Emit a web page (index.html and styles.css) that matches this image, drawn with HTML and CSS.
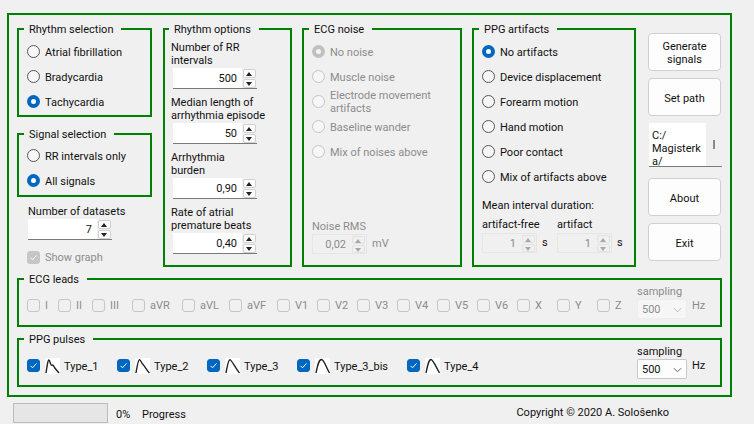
FILE: index.html
```html
<!DOCTYPE html>
<html lang="en">
<head>
    <meta charset="UTF-8">
    <meta name="viewport" content="width=device-width, initial-scale=1.0">
    <title>Signal generator</title>
    <link rel="stylesheet" href="styles.css">
</head>
<body>

    <div class="frame">
        <div class="top-row">

            <div class="left-col">
                <div class="group rhythm-sel">
                    <span class="group-title">Rhythm selection</span>
                    <div class="opt"><span class="radio"></span>Atrial fibrillation</div>
                    <div class="opt"><span class="radio"></span>Bradycardia</div>
                    <div class="opt"><span class="radio on"></span>Tachycardia</div>
                </div>
                <div class="group signal-sel">
                    <span class="group-title">Signal selection</span>
                    <div class="opt"><span class="radio"></span>RR intervals only</div>
                    <div class="opt"><span class="radio on"></span>All signals</div>
                </div>
                <div class="datasets">
                    <div class="line">Number of datasets</div>
                    <div class="spin"><span class="spin-val">7</span><span class="spin-btns"><i class="up"></i><i class="down"></i></span></div>
                </div>
                <div class="show-graph off"><span class="check ticked-off"><svg viewBox="0 0 13 13"><path d="M3.5 6.8l2 2 4-4.4" /></svg></span>Show graph</div>
            </div>

            <div class="group rhythm-opts">
                <span class="group-title">Rhythm options</span>
                <div class="field">
                    <div class="two-line">Number of RR<br>intervals</div>
                    <div class="spin"><span class="spin-val">500</span><span class="spin-btns"><i class="up"></i><i class="down"></i></span></div>
                </div>
                <div class="field">
                    <div class="two-line">Median length of<br>arrhythmia episode</div>
                    <div class="spin"><span class="spin-val">50</span><span class="spin-btns"><i class="up"></i><i class="down"></i></span></div>
                </div>
                <div class="field">
                    <div class="two-line">Arrhythmia<br>burden</div>
                    <div class="spin"><span class="spin-val">0,90</span><span class="spin-btns"><i class="up"></i><i class="down"></i></span></div>
                </div>
                <div class="field">
                    <div class="two-line">Rate of atrial<br>premature beats</div>
                    <div class="spin"><span class="spin-val">0,40</span><span class="spin-btns"><i class="up"></i><i class="down"></i></span></div>
                </div>
            </div>

            <div class="group ecg-noise off">
                <span class="group-title">ECG noise</span>
                <div class="opt"><span class="radio on-off"></span>No noise</div>
                <div class="opt"><span class="radio"></span>Muscle noise</div>
                <div class="opt"><span class="radio"></span><span class="two-line">Electrode movement<br>artifacts</span></div>
                <div class="opt"><span class="radio"></span>Baseline wander</div>
                <div class="opt"><span class="radio"></span>Mix of noises above</div>
                <div class="noise-rms">
                    <div class="line">Noise RMS</div>
                    <div class="spin-row">
                        <div class="spin small"><span class="spin-val">0,02</span><span class="spin-btns"><i class="up"></i><i class="down"></i></span></div>
                        <span>mV</span>
                    </div>
                </div>
            </div>

            <div class="group ppg-art">
                <span class="group-title">PPG artifacts</span>
                <div class="opt"><span class="radio on"></span>No artifacts</div>
                <div class="opt"><span class="radio"></span>Device displacement</div>
                <div class="opt"><span class="radio"></span>Forearm motion</div>
                <div class="opt"><span class="radio"></span>Hand motion</div>
                <div class="opt"><span class="radio"></span>Poor contact</div>
                <div class="opt"><span class="radio"></span>Mix of artifacts above</div>
                <div class="mean-title line">Mean interval duration:</div>
                <div class="mean-grid">
                    <div>
                        <div class="line">artifact-free</div>
                        <div class="spin-row">
                            <div class="spin small narrow"><span class="spin-val">1</span><span class="spin-btns"><i class="up"></i><i class="down"></i></span></div>
                            <span>s</span>
                        </div>
                    </div>
                    <div>
                        <div class="line">artifact</div>
                        <div class="spin-row">
                            <div class="spin small narrow"><span class="spin-val">1</span><span class="spin-btns"><i class="up"></i><i class="down"></i></span></div>
                            <span>s</span>
                        </div>
                    </div>
                </div>
            </div>

            <div class="side">
                <button class="btn">Generate<br>signals</button>
                <button class="btn">Set path</button>
                <div class="path-box">
                    <div class="path-text">C:/<br>Magisterk<br>a/</div>
                    <div class="path-scroll"><span></span></div>
                </div>
                <button class="btn about">About</button>
                <button class="btn">Exit</button>
            </div>
        </div>

        <div class="group bar-group off">
            <span class="group-title">ECG leads</span>
            <div class="leads">
                <div class="item"><span class="check"></span>I</div>
                <div class="item"><span class="check"></span>II</div>
                <div class="item"><span class="check"></span>III</div>
                <div class="item"><span class="check"></span>aVR</div>
                <div class="item"><span class="check"></span>aVL</div>
                <div class="item"><span class="check"></span>aVF</div>
                <div class="item"><span class="check"></span>V1</div>
                <div class="item"><span class="check"></span>V2</div>
                <div class="item"><span class="check"></span>V3</div>
                <div class="item"><span class="check"></span>V4</div>
                <div class="item"><span class="check"></span>V5</div>
                <div class="item"><span class="check"></span>V6</div>
                <div class="item"><span class="check"></span>X</div>
                <div class="item"><span class="check"></span>Y</div>
                <div class="item"><span class="check"></span>Z</div>
            </div>
            <div class="sampling">
                <div class="line">sampling</div>
                <div class="combo-row">
                    <div class="combo"><span>500</span><svg viewBox="0 0 10 6"><path d="M1 1l4 4 4-4" /></svg></div>
                    <span>Hz</span>
                </div>
            </div>
        </div>

        <div class="group bar-group">
            <span class="group-title">PPG pulses</span>
            <div class="pulses">
                <div class="item">
                    <span class="check ticked"><svg viewBox="0 0 13 13"><path d="M3.5 6.8l2 2 4-4.4" /></svg></span>
                    <svg class="pulse" viewBox="0 0 15 16"><path d="M1 15C2 9 2.6 2.5 3.8 2 5 1.8 5.4 7.5 6.6 7.4 8 6.4 8.6 7.6 9.8 10L14 15" /></svg>
                    Type_1
                </div>
                <div class="item">
                    <span class="check ticked"><svg viewBox="0 0 13 13"><path d="M3.5 6.8l2 2 4-4.4" /></svg></span>
                    <svg class="pulse" viewBox="0 0 15 16"><path d="M1 15C2 9 3 2 4.4 1.6 5.8 1.8 6.4 5 8 6.6 10 8.6 12 12.6 14.5 15" /></svg>
                    Type_2
                </div>
                <div class="item">
                    <span class="check ticked"><svg viewBox="0 0 13 13"><path d="M3.5 6.8l2 2 4-4.4" /></svg></span>
                    <svg class="pulse" viewBox="0 0 15 16"><path d="M1 15C2 10 3 2 5 1.6 6.6 1.8 11 11 14.5 15" /></svg>
                    Type_3
                </div>
                <div class="item">
                    <span class="check ticked"><svg viewBox="0 0 13 13"><path d="M3.5 6.8l2 2 4-4.4" /></svg></span>
                    <svg class="pulse" viewBox="0 0 15 16"><path d="M1 15C2.5 8 3.6 1.5 6.5 1.5 9 1.5 11.5 10 14.5 15" /></svg>
                    Type_3_bis
                </div>
                <div class="item">
                    <span class="check ticked"><svg viewBox="0 0 13 13"><path d="M3.5 6.8l2 2 4-4.4" /></svg></span>
                    <svg class="pulse" viewBox="0 0 15 16"><path d="M1 15C2.5 8 3.6 1.5 6 1.5 8 1.5 11.5 10 14.5 15" /></svg>
                    Type_4
                </div>
            </div>
            <div class="sampling">
                <div class="line">sampling</div>
                <div class="combo-row">
                    <div class="combo"><span>500</span><svg viewBox="0 0 10 6"><path d="M1 1l4 4 4-4" /></svg></div>
                    <span class="unit">Hz</span>
                </div>
            </div>
        </div>
    </div>

    <div class="status">
        <div class="progress"></div>
        <span class="percent">0%</span>
        <span class="status-label">Progress</span>
        <span class="copyright">Copyright © 2020 A. Sološenko</span>
    </div>

</body>
</html>
```

FILE: styles.css
```css
* {
    box-sizing: border-box;
}
html, body {
    height: 100%;
}
body {
    margin: 0;
    overflow: hidden;
    background-color: #f0f0f0;
    color: #111;
    font-family: Roboto, Arial, sans-serif;
    font-size: 11px;
    line-height: 14px;
}
.frame {
    width: 725px;
    height: 384px;
    margin: 13px 0 0 7px;
    padding: 13px 8px 8px 8px;
    border: 2px solid #008000;
    display: flex;
    flex-direction: column;
    gap: 11px;
}
.top-row {
    display: flex;
    gap: 10px;
    height: 239px;
}
.left-col {
    width: 136px;
}
.group {
    position: relative;
    border: 2px solid #008000;
    padding: 9px 8px 0 8px;
}
.group-title {
    position: absolute;
    top: -7px;
    left: 5px;
    padding: 0 8px 0 5px;
    background-color: #f0f0f0;
    color: #111;
}
.rhythm-sel {
    width: 135px;
    height: 89px;
}
.signal-sel {
    width: 135px;
    height: 64px;
    margin-top: 16px;
    padding-top: 8px;
}
.line {
    padding-top: 1px;
}
.opt {
    display: flex;
    align-items: center;
    gap: 5px;
    height: 25px;
    padding-top: 2px;
}
.opt .two-line {
    margin-top: -2px;
}
.two-line {
    line-height: 13px;
}
.radio {
    flex: none;
    width: 13px;
    height: 13px;
    margin-top: -2px;
    border: 1px solid #555;
    border-radius: 50%;
    background-color: #f6f6f6;
}
.radio.on {
    border: 4px solid #0067c0;
    background-color: #fff;
}
.radio.on-off {
    border: 4px solid #c0c0c0;
    background-color: #f4f4f4;
}

/* spin boxes */
.spin {
    display: flex;
    width: 84px;
    height: 21px;
    background-color: #fff;
    border-bottom: 1px solid #7a7a7a;
}
.spin-val {
    flex: 1;
    padding-right: 5px;
    text-align: right;
    line-height: 22px;
}
.spin-btns {
    flex: none;
    width: 15px;
    padding: 1px 1px 0 1px;
    background-color: #f0f0f0;
    display: flex;
    flex-direction: column;
    gap: 1px;
}
.spin-btns i {
    flex: 1;
    position: relative;
    background-color: #fdfdfd;
    border: 1px solid #d0d0d0;
    border-radius: 2px;
}
.spin-btns i::after {
    content: "";
    position: absolute;
    left: 2px;
    top: 2px;
    border-left: 3.5px solid transparent;
    border-right: 3.5px solid transparent;
}
.spin-btns .up::after {
    border-bottom: 4px solid #222;
}
.spin-btns .down::after {
    border-top: 4px solid #222;
}
.spin.small {
    width: 55px;
    height: 20px;
    background-color: #f0f0f0;
    border: 1px solid #e6e6e6;
    color: #8c8c8c;
}
.spin.small .spin-val {
    line-height: 20px;
}
.spin.small .spin-btns i {
    background-color: #f0f0f0;
    border-color: #e2e2e2;
}
.spin.small .up::after {
    border-bottom-color: #a8a8a8;
}
.spin.small .down::after {
    border-top-color: #a8a8a8;
}
.spin-row {
    display: flex;
    align-items: center;
    gap: 5px;
}

.datasets {
    margin: 7px 0 0 11px;
}
.show-graph {
    display: flex;
    align-items: center;
    gap: 5px;
    margin: 10px 0 0 10px;
    height: 14px;
    padding-top: 2px;
}
.show-graph .check {
    margin-top: -2px;
}

.check {
    flex: none;
    width: 13px;
    height: 13px;
    border: 1px solid #555;
    border-radius: 3px;
}
.check svg {
    display: block;
    width: 13px;
    height: 13px;
    margin: -1px;
    fill: none;
    stroke: #fff;
    stroke-width: 1;
}
.check.ticked {
    background-color: #0067c0;
    border-color: #0067c0;
}
.check.ticked-off {
    background-color: #c6c6c6;
    border-color: #c6c6c6;
}

.off {
    color: #8c8c8c;
}
.off .radio {
    border-color: #c4c4c4;
}
.off .radio.on-off {
    border-color: #c0c0c0;
}
.off .check {
    border-color: #c6c6c6;
}

.rhythm-opts {
    width: 129px;
    padding: 10px 6px 0 6px;
}
.rhythm-opts .group-title {
    left: 4px;
}
.field {
    margin-bottom: 6px;
}
.field .two-line {
    height: 26px;
    margin-bottom: 2px;
    padding-top: 1px;
}
.field .spin {
    margin-left: 2px;
}

.ecg-noise {
    width: 160px;
    display: flex;
    flex-direction: column;
}
.noise-rms {
    margin-top: auto;
    padding-bottom: 11px;
}
.noise-rms .line {
    height: 15px;
}

.ppg-art {
    width: 164px;
}
.mean-title {
    margin-top: 9px;
}
.mean-grid {
    display: grid;
    grid-template-columns: 75px 75px;
    margin-top: 4px;
}
.mean-grid .line {
    height: 16px;
}

.side {
    width: 74px;
    margin-left: 2px;
    padding-top: 5px;
    display: flex;
    flex-direction: column;
    gap: 7px;
}
.btn {
    width: 73px;
    height: 38px;
    padding: 2px 0 0 0;
    border: 1px solid #d0d0d0;
    border-radius: 4px;
    background-color: #fdfdfd;
    color: #111;
    font: inherit;
    line-height: 13px;
}
.btn.about {
    margin-top: 4px;
}
.path-box {
    display: flex;
    height: 44px;
    margin-left: 1px;
    border-bottom: 1px solid #7a7a7a;
    overflow: hidden;
}
.path-text {
    width: 57px;
    padding: 6px 0 0 3px;
    background-color: #fff;
    line-height: 13px;
}
.path-scroll {
    flex: 1;
    display: flex;
    align-items: center;
    justify-content: center;
}
.path-scroll span {
    width: 2px;
    height: 9px;
    background-color: #8a8a8a;
}

.bar-group {
    height: 49px;
    padding: 4px 0 0 8px;
    display: flex;
}
.leads, .pulses {
    display: grid;
    grid-auto-rows: 15px;
    align-items: center;
    width: 610px;
    margin-top: 14px;
}
.leads {
    grid-template-columns: 31px 34px 40px 50px 47px 48px repeat(9, 40px);
}
.pulses {
    grid-template-columns: 90px 90px 90px 110px 120px;
    color: #111;
}
.item {
    display: flex;
    align-items: center;
    gap: 5px;
}
.pulses .item {
    padding-top: 2px;
}
.pulses .check, .pulses .pulse {
    margin-top: -2px;
}
.pulse {
    flex: none;
    width: 15px;
    height: 16px;
    margin-right: -1px;
    background-color: #fff;
    fill: none;
    stroke: #222;
    stroke-width: 1.4;
}
.sampling .line {
    height: 15px;
}
.combo-row {
    display: flex;
    align-items: flex-start;
    gap: 5px;
}
.combo {
    display: flex;
    align-items: center;
    justify-content: space-between;
    width: 50px;
    height: 20px;
    padding: 2px 4px 0 4px;
    background-color: #fdfdfd;
    border: 1px solid #c8c8c8;
    border-radius: 2px;
}
.combo svg {
    width: 9px;
    height: 6px;
    fill: none;
    stroke: #555;
    stroke-width: 1;
}
.off .combo {
    background-color: #f6f6f6;
    border-color: #ededed;
}
.off .combo svg {
    stroke: #b0b0b0;
}

.status {
    display: flex;
    align-items: center;
    margin-top: 6px;
    padding-left: 13px;
}
.progress {
    width: 95px;
    height: 20px;
    background-color: #e6e6e6;
    border: 1px solid #bcbcbc;
}
.percent {
    width: 26px;
    margin-left: 8px;
    padding-top: 3px;
}
.status-label {
    padding-top: 3px;
}
.copyright {
    margin-left: auto;
    margin-right: 85px;
}
```
